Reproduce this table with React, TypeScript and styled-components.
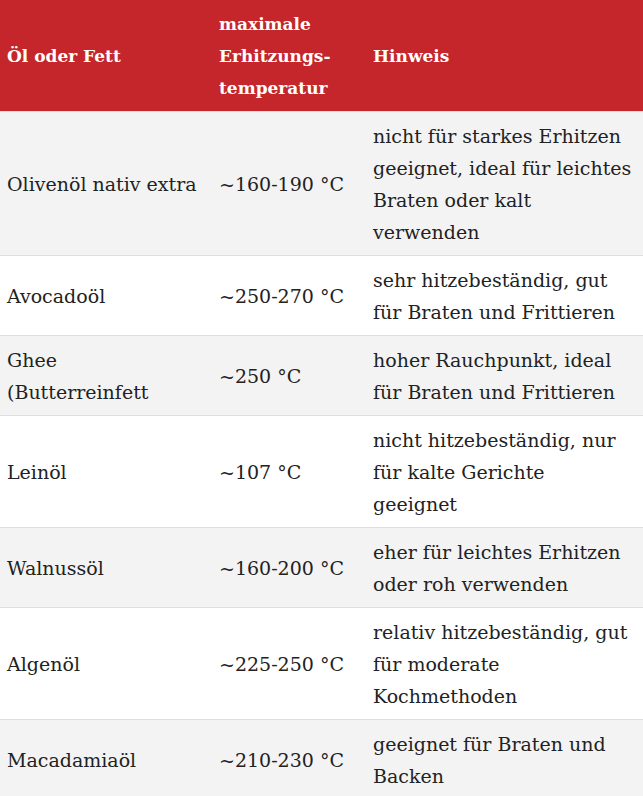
import React from "react";
import styled, { createGlobalStyle } from "styled-components";

const GlobalStyle = createGlobalStyle`
  html, body { margin: 0; padding: 0; background: #ffffff; }
  body { font-family: "DejaVu Serif", "Liberation Serif", serif; color: #222222; }
`;

const Table = styled.table`
  width: 643px;
  border-collapse: collapse;
  table-layout: fixed;
  font-size: 19px;
  line-height: 32px;
`;

const Col = styled.col<{ $w: number }>`
  width: ${(p) => p.$w}px;
`;

const HeadRow = styled.tr`
  background: #c4262b;
`;

const HeadCell = styled.th`
  color: #ffffff;
  font-weight: bold;
  font-size: 17px;
  text-align: left;
  vertical-align: middle;
  padding: 7px;
  height: 97px;
  hyphens: manual;
`;

const BodyRow = styled.tr<{ $striped: boolean }>`
  background: ${(p) => (p.$striped ? "#f3f3f3" : "#ffffff")};
  border-top: 1px solid #dedede;
`;

const Cell = styled.td<{ $padRight: number }>`
  vertical-align: middle;
  text-align: left;
  padding: 8px ${(p) => p.$padRight}px 7px 7px;
`;

const rows: [string, string, string][] = [
  ["Olivenöl nativ extra", "~160-190 °C", "nicht für starkes Erhitzen geeignet, ideal für leichtes Braten oder kalt verwenden"],
  ["Avocadoöl", "~250-270 °C", "sehr hitzebeständig, gut für Braten und Frittieren"],
  ["Ghee (Butterreinfett", "~250 °C", "hoher Rauchpunkt, ideal für Braten und Frittieren"],
  ["Leinöl", "~107 °C", "nicht hitzebeständig, nur für kalte Gerichte geeignet"],
  ["Walnussöl", "~160-200 °C", "eher für leichtes Erhitzen oder roh verwenden"],
  ["Algenöl", "~225-250 °C", "relativ hitzebeständig, gut für moderate Kochmethoden"],
  ["Macadamiaöl", "~210-230 °C", "geeignet für Braten und Backen"],
];

export default function App() {
  return (
    <>
      <GlobalStyle />
      <Table>
        <colgroup>
          <Col $w={212} />
          <Col $w={154} />
          <Col $w={277} />
        </colgroup>
        <thead>
          <HeadRow>
            <HeadCell>Öl oder Fett</HeadCell>
            <HeadCell>maximale Erhitzungs&shy;temperatur</HeadCell>
            <HeadCell>Hinweis</HeadCell>
          </HeadRow>
        </thead>
        <tbody>
          {rows.map(([a, b, c], i) => (
            <BodyRow key={a} $striped={i % 2 === 0}>
              <Cell $padRight={14}>{a}</Cell>
              <Cell $padRight={7}>{b}</Cell>
              <Cell $padRight={10}>{c}</Cell>
            </BodyRow>
          ))}
        </tbody>
      </Table>
    </>
  );
}
